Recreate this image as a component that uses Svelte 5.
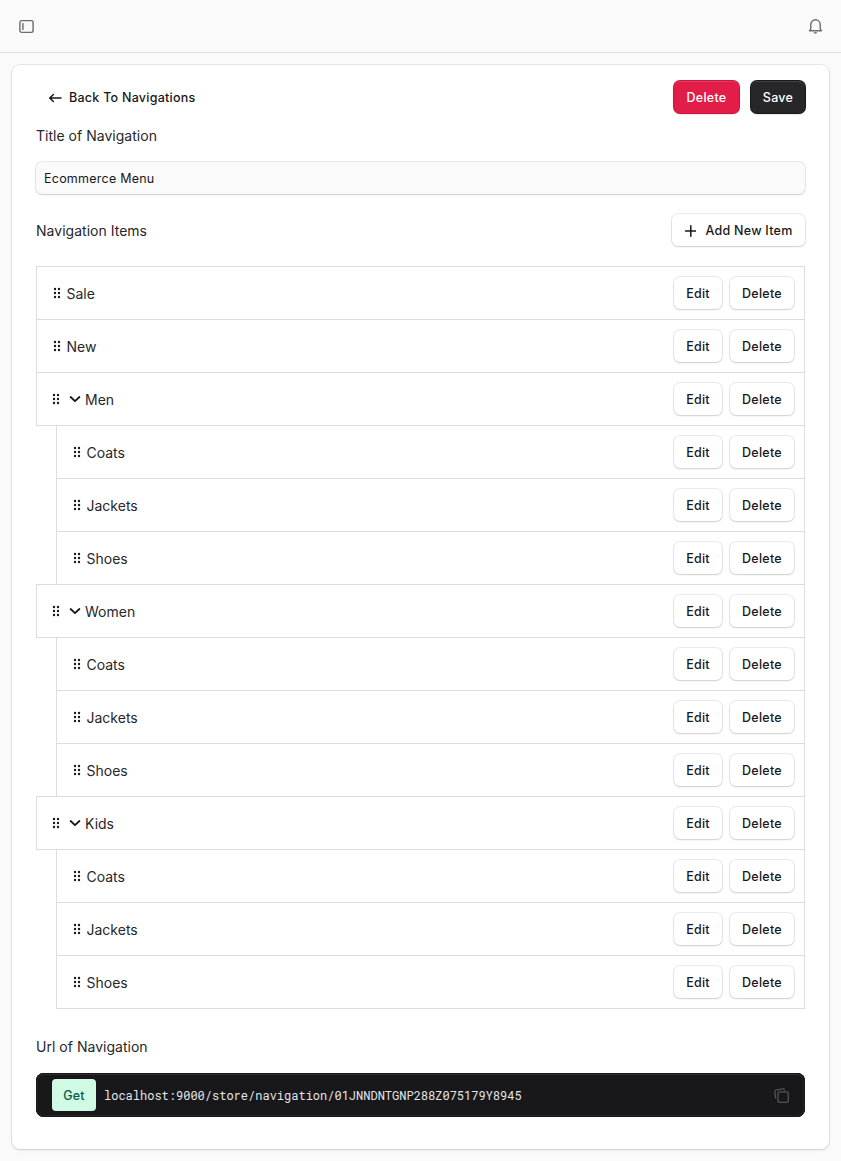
<script>
  const kids = ['Coats', 'Jackets', 'Shoes'];
  const items = [
    { title: 'Sale' },
    { title: 'New' },
    { title: 'Men', children: kids },
    { title: 'Women', children: kids },
    { title: 'Kids', children: kids },
  ];
  let menuTitle = $state('Ecommerce Menu');
</script>

{#snippet dots()}
  <svg class="dots" width="8" height="12" viewBox="0 0 8 12" fill="currentColor">
    {#each [2, 6, 10] as y}
      <circle cx="2" cy={y} r="1.2" />
      <circle cx="6" cy={y} r="1.2" />
    {/each}
  </svg>
{/snippet}

{#snippet row(title, kind)}
  <div class="row {kind}">
    {@render dots()}
    {#if kind === 'parent'}
      <svg class="chevron" width="12" height="12" viewBox="0 0 12 12" fill="none" stroke="currentColor" stroke-width="1.8" stroke-linecap="round" stroke-linejoin="round">
        <path d="M1.6 4 6 8.2 10.4 4" />
      </svg>
    {/if}
    <span class="title">{title}</span>
    <button class="btn edit">Edit</button>
    <button class="btn remove">Delete</button>
  </div>
{/snippet}

<div class="page">
  <header>
    <svg width="15" height="15" viewBox="0 0 15 15" fill="none" stroke="currentColor" stroke-width="1.4" stroke-linecap="round" stroke-linejoin="round">
      <rect x="0.9" y="1.6" width="13.2" height="11.8" rx="1.8" />
      <path d="M3.9 4.6v5.8" />
    </svg>
    <svg width="15" height="15" viewBox="0 0 15 15" fill="none" stroke="currentColor" stroke-width="1.4" stroke-linecap="round" stroke-linejoin="round">
      <path d="M1.5 11.7c.9-.5 1.3-1.3 1.3-2.6V5.5C2.8 2.8 4.9.8 7.5.8s4.7 2 4.7 4.7v3.6c0 1.3.4 2.1 1.3 2.6z" />
      <path d="M6.1 13.6h2.8l-1.4.8z" fill="currentColor" stroke-width=".6" />
    </svg>
  </header>

  <main>
    <div class="top">
      <button class="back">
        <svg width="14" height="12" viewBox="0 0 14 12" fill="none" stroke="currentColor" stroke-width="1.5" stroke-linecap="round" stroke-linejoin="round">
          <path d="M5.4 2.5 1.7 6l3.7 3.5M1.7 6h11.3" />
        </svg>
        Back To Navigations
      </button>
      <button class="btn danger">Delete</button>
      <button class="btn dark">Save</button>
    </div>

    <label for="menu-title">Title of Navigation</label>
    <input id="menu-title" bind:value={menuTitle} />

    <div class="items-head">
      <span class="label">Navigation Items</span>
      <button class="btn add">
        <svg width="12" height="12" viewBox="0 0 12 12" fill="none" stroke="currentColor" stroke-width="1.5" stroke-linecap="round">
          <path d="M6.8 .8v10.4M1.5 6h10.4" />
        </svg>
        Add New Item
      </button>
    </div>

    <div class="list">
      {#each items as item}
        {@render row(item.title, item.children ? 'parent' : 'leaf')}
        {#if item.children}
          <div class="children">
            {#each item.children as child}
              {@render row(child, 'child')}
            {/each}
          </div>
        {/if}
      {/each}
    </div>

    <span class="label url-label">Url of Navigation</span>
    <div class="code">
      <span class="method">Get</span>
      <code>localhost:9000/store/navigation/01JNNDNTGNP288Z075179Y8945</code>
      <svg width="15" height="15" viewBox="0 0 15 15" fill="none" stroke="currentColor" stroke-width="1.3" stroke-linecap="round" stroke-linejoin="round">
        <rect x="3.9" y="3.9" width="10.4" height="10.4" rx="2" />
        <path d="M1.6 10.2.8 4.1A2.1 2.1 0 0 1 2.7 1.8L8.6.9c.9-.1 1.6.3 2 1" />
      </svg>
    </div>
  </main>
</div>

<style>
  :global(body) {
    background: #fafafa;
  }
  .page {
    height: 1161px;
    box-sizing: border-box;
    font-family: Inter, sans-serif;
    color: #18181b;
    background: #fafafa;
    overflow: hidden;
  }
  header {
    box-sizing: border-box;
    height: 53px;
    padding: 0 18px 0 19px;
    border-bottom: 1px solid #e0e0e1;
    display: flex;
    align-items: center;
    justify-content: space-between;
    color: #6b6b70;
  }
  main {
    box-sizing: border-box;
    margin: 12px 12px 0;
    height: 1084px;
    padding: 16px 24px 0;
    background: #fff;
    border-radius: 8px;
    box-shadow: 0 0 0 1px rgba(0, 0, 0, 0.08), 0 1px 2px rgba(0, 0, 0, 0.08), 0 2px 4px rgba(0, 0, 0, 0.03);
    display: flex;
    flex-direction: column;
  }
  button {
    font: 500 12.5px/20px Inter, sans-serif;
    letter-spacing: 0.26px;
    color: #18181b;
    border: 0;
    padding: 2px 0 0;
    white-space: nowrap;
  }
  button svg {
    margin-top: -1px;
  }
  .btn {
    height: 32px;
    border-radius: 6px;
    background: #fff;
    box-shadow: 0 0 0 1px rgba(0, 0, 0, 0.08), 0 1px 2px rgba(0, 0, 0, 0.12);
    display: flex;
    align-items: center;
    justify-content: center;
    flex: none;
  }
  .top {
    display: flex;
    height: 32px;
    align-items: center;
  }
  .back {
    margin: 0 auto 0 12px;
    background: none;
    display: flex;
    align-items: center;
    gap: 7px;
  }
  .danger {
    width: 65px;
    background: #e11d48;
    color: #fff;
    box-shadow: inset 0 1px rgba(255, 255, 255, 0.14), 0 0 0 1px #c8173e, 0 1px 2px rgba(190, 18, 60, 0.4);
  }
  .dark {
    width: 54px;
    margin-left: 12px;
    background: #27272a;
    color: #fff;
    box-shadow: inset 0 1px rgba(255, 255, 255, 0.12), 0 0 0 1px #18181b, 0 1px 2px rgba(0, 0, 0, 0.3);
  }
  label,
  .label {
    font-size: 14px;
    line-height: 24px;
    letter-spacing: 0.02px;
    color: #27272a;
  }
  label {
    margin-top: 11px;
  }
  input {
    box-sizing: border-box;
    width: 100%;
    height: 32px;
    margin-top: 14px;
    padding: 0 8px;
    border: 0;
    border-radius: 6px;
    outline: 0;
    background: #fafafa;
    color: #18181b;
    font: 400 12.5px/20px Inter, sans-serif;
    letter-spacing: 0.24px;
    box-shadow: 0 0 0 1px rgba(0, 0, 0, 0.08), 0 1px 2px rgba(0, 0, 0, 0.12);
  }
  .items-head {
    margin-top: 20px;
    display: flex;
    justify-content: space-between;
    align-items: center;
  }
  .items-head .label {
    padding-top: 2px;
  }
  .add {
    width: 133px;
    gap: 9px;
  }
  .list {
    margin-top: 20px;
    padding-top: 1px;
  }
  .row {
    box-sizing: border-box;
    height: 54px;
    margin-top: -1px;
    border: 1px solid #dcdcde;
    display: flex;
    align-items: center;
    padding: 0 10px 0 16px;
  }
  .children {
    margin-left: 20px;
  }
  .parent {
    padding-left: 15px;
  }
  .chevron {
    margin-left: 9px;
  }
  .title {
    font-size: 14px;
    line-height: 24px;
    padding-top: 2px;
    margin-left: 5.5px;
    margin-right: auto;
    color: #27272a;
  }
  .parent .title {
    margin-left: 4px;
  }
  .edit {
    width: 48px;
    margin-right: 8px;
  }
  .remove {
    width: 64px;
  }
  .url-label {
    margin-top: 26px;
  }
  .code {
    box-sizing: border-box;
    margin-top: 14px;
    height: 44px;
    padding: 0 16px;
    border-radius: 8px;
    background: #18181b;
    box-shadow: inset 0 0 0 1px #18181b, inset 0 2px #2d2d30, inset 0 0 0 2px #222225;
    display: flex;
    align-items: center;
    color: #52525b;
  }
  .method {
    width: 44px;
    height: 32px;
    border-radius: 4px;
    background: #d1fae5;
    color: #065f46;
    font: 500 12.5px/33px Inter, sans-serif;
    letter-spacing: 0.26px;
    text-align: center;
  }
  code {
    margin: 0 auto 0 8px;
    font: 12px/20px "Roboto Mono", "Liberation Mono", monospace;
    color: #e4e4e7;
  }
</style>
